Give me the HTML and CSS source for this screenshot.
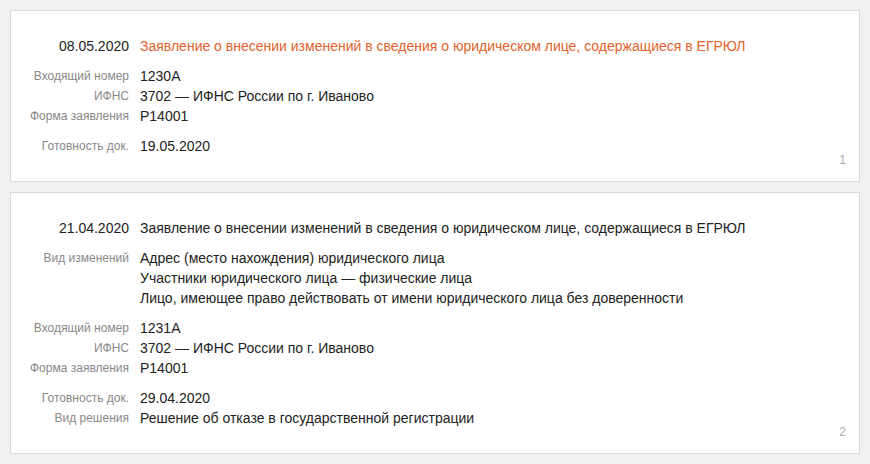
FILE: index.html
```html
<!DOCTYPE html>
<html lang="ru">
<head>
    <meta charset="UTF-8">
    <meta name="viewport" content="width=device-width, initial-scale=1.0">
    <title>Заявления</title>
    <link rel="stylesheet" href="styles.css">
</head>
<body>
    <!-- Заявление 1 -->
    <div class="card">
        <div class="row head">
            <div class="date">08.05.2020</div>
            <div class="title active">Заявление о внесении изменений в сведения о юридическом лице, содержащиеся в ЕГРЮЛ</div>
        </div>
        <div class="group">
            <div class="row">
                <div class="label">Входящий номер</div>
                <div class="value">1230А</div>
            </div>
            <div class="row">
                <div class="label">ИФНС</div>
                <div class="value">3702 — ИФНС России по г. Иваново</div>
            </div>
            <div class="row">
                <div class="label">Форма заявления</div>
                <div class="value">Р14001</div>
            </div>
        </div>
        <div class="group">
            <div class="row">
                <div class="label">Готовность док.</div>
                <div class="value">19.05.2020</div>
            </div>
        </div>
        <span class="num">1</span>
    </div>

    <!-- Заявление 2 -->
    <div class="card">
        <div class="row head">
            <div class="date">21.04.2020</div>
            <div class="title">Заявление о внесении изменений в сведения о юридическом лице, содержащиеся в ЕГРЮЛ</div>
        </div>
        <div class="group">
            <div class="row">
                <div class="label">Вид изменений</div>
                <div class="value">
                    <div>Адрес (место нахождения) юридического лица</div>
                    <div>Участники юридического лица — физические лица</div>
                    <div>Лицо, имеющее право действовать от имени юридического лица без доверенности</div>
                </div>
            </div>
        </div>
        <div class="group">
            <div class="row">
                <div class="label">Входящий номер</div>
                <div class="value">1231А</div>
            </div>
            <div class="row">
                <div class="label">ИФНС</div>
                <div class="value">3702 — ИФНС России по г. Иваново</div>
            </div>
            <div class="row">
                <div class="label">Форма заявления</div>
                <div class="value">Р14001</div>
            </div>
        </div>
        <div class="group">
            <div class="row">
                <div class="label">Готовность док.</div>
                <div class="value">29.04.2020</div>
            </div>
            <div class="row">
                <div class="label">Вид решения</div>
                <div class="value">Решение об отказе в государственной регистрации</div>
            </div>
        </div>
        <span class="num">2</span>
    </div>
</body>
</html>
```

FILE: styles.css
```css
body {
    font-family: "Liberation Sans", Arial, sans-serif;
    background-color: #f0f0f0;
    color: #222;
    margin: 10px;
}
.card {
    position: relative;
    background: #fff;
    border: 1px solid #d9d9d9;
    padding: 25px 0;
    margin-bottom: 10px;
}
.row {
    display: grid;
    grid-template-columns: 118px 1fr;
    column-gap: 11px;
    align-items: start;
    font-size: 14px;
    line-height: 20px;
}
.group {
    margin-top: 10px;
}
.label {
    text-align: right;
    font-size: 12px;
    line-height: 19px;
    padding-top: 1px;
    color: #888;
}
.date {
    text-align: right;
}
.title.active {
    color: #e2622b;
}
.num {
    position: absolute;
    right: 13px;
    bottom: 14px;
    font-size: 12px;
    line-height: 14px;
    color: #aaa;
}
```
